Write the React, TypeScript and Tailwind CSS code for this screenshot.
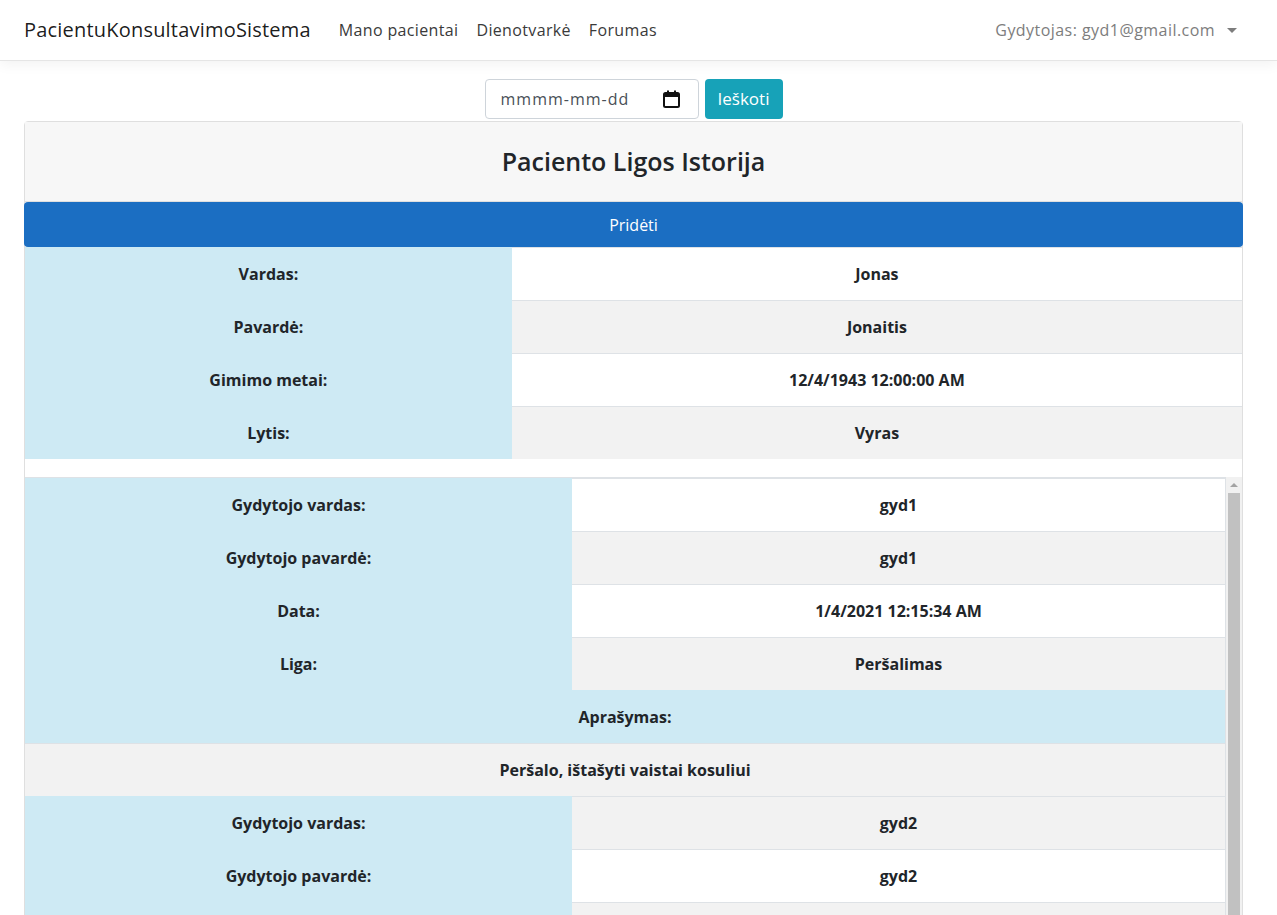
import React from "react";

type Row = { label: string; value: string; striped: boolean };

const patient: Row[] = [
  { label: "Vardas:", value: "Jonas", striped: false },
  { label: "Pavardė:", value: "Jonaitis", striped: true },
  { label: "Gimimo metai:", value: "12/4/1943 12:00:00 AM", striped: false },
  { label: "Lytis:", value: "Vyras", striped: true },
];

type Visit = { vardas: string; pavarde: string; data: string; liga: string; aprasymas: string };

const visits: Visit[] = [
  { vardas: "gyd1", pavarde: "gyd1", data: "1/4/2021 12:15:34 AM", liga: "Peršalimas", aprasymas: "Peršalo, ištašyti vaistai kosuliui" },
  { vardas: "gyd2", pavarde: "gyd2", data: "1/5/2021 10:42:11 AM", liga: "Gripas", aprasymas: "Karščiuoja, paskirtas lovos režimas" },
];

function InfoRow({ label, value, striped, left }: Row & { left: string }) {
  return (
    <div className="flex h-[53px]">
      <div className={`${left} flex shrink-0 items-center justify-center bg-[#ceeaf4] font-bold`}>{label}</div>
      <div
        className={`flex flex-1 items-center justify-center border-t border-[#dee2e6] font-bold ${
          striped ? "bg-[#f2f2f2]" : "bg-white"
        }`}
      >
        {value}
      </div>
    </div>
  );
}

function CalendarIcon() {
  return (
    <svg width="17" height="18" viewBox="0 0 17 18" fill="none">
      <rect x="1" y="3" width="15" height="14" rx="1.5" stroke="#111" strokeWidth="2" />
      <rect x="1" y="3" width="15" height="4" fill="#111" />
      <rect x="4" y="0.5" width="2" height="4" fill="#111" />
      <rect x="11" y="0.5" width="2" height="4" fill="#111" />
    </svg>
  );
}

export default function App() {
  return (
    <div className="h-[915px] overflow-hidden bg-white font-['Open_Sans',sans-serif] text-[16px] text-[#212529]">
      {/* Navbar */}
      <nav className="flex h-[61px] items-center border-b border-[#e5e5e5] pl-6 pr-[40px] shadow-[0_4px_12px_rgba(0,0,0,0.05)]">
        <span className="mr-[28px] text-[20px] tracking-[0.2px] text-black/90">PacientuKonsultavimoSistema</span>
        <div className="flex gap-[18px] tracking-[0.35px] text-[#3a3a3a]">
          <span>Mano pacientai</span>
          <span>Dienotvarkė</span>
          <span>Forumas</span>
        </div>
        <div className="ml-auto flex items-center text-[#7d7d7d]">
          <span className="tracking-[0.45px]">Gydytojas: gyd1@gmail.com</span>
          <span className="ml-[12px] h-0 w-0 border-x-[5px] border-t-[5px] border-x-transparent border-t-[#7d7d7d]" />
        </div>
      </nav>

      <main className="pl-6 pr-[34px]">
        {/* Search */}
        <div className="mt-[18px] flex justify-center gap-[6px]">
          <div className="flex h-[40px] w-[214px] items-center justify-between rounded-[4px] border border-[#ced4da] bg-white pl-[15px] pr-[18px] text-[#495057]">
            <span className="tracking-[1px]">mmmm-mm-dd</span>
            <CalendarIcon />
          </div>
          <button className="h-[40px] w-[78px] rounded-[4px] bg-[#17a2b8] text-[17px] text-white">Ieškoti</button>
        </div>

        {/* Card */}
        <div className="mt-[2px] rounded-[4px] border border-[#dfdfdf]">
          <div className="flex h-[80px] items-center justify-center border-b border-[#dfdfdf] bg-[#f7f7f7]">
            <h3 className="text-[25px] font-semibold">Paciento Ligos Istorija</h3>
          </div>
          <button className="-mx-px flex h-[45px] w-[calc(100%+2px)] items-center justify-center rounded-[4px] bg-[#1b6ec2] text-white">
            Pridėti
          </button>

          {patient.map((r) => (
            <InfoRow key={r.label} {...r} left="w-[40%]" />
          ))}

          <div className="h-[18px]" />

          <div className="flex">
            <div className="flex-1 border-t border-r border-[#dee2e6]">
              {visits.map((v, i) => (
                <div key={i}>
                  <InfoRow label="Gydytojo vardas:" value={v.vardas} striped={i % 2 === 1} left="w-[547px]" />
                  <InfoRow label="Gydytojo pavardė:" value={v.pavarde} striped={i % 2 === 0} left="w-[547px]" />
                  <InfoRow label="Data:" value={v.data} striped={i % 2 === 1} left="w-[547px]" />
                  <InfoRow label="Liga:" value={v.liga} striped={i % 2 === 0} left="w-[547px]" />
                  <div className="flex h-[53px] items-center justify-center bg-[#ceeaf4] font-bold">Aprašymas:</div>
                  <div className="flex h-[53px] items-center justify-center border-t border-[#dee2e6] bg-[#f2f2f2] font-bold">
                    {v.aprasymas}
                  </div>
                </div>
              ))}
            </div>
            {/* scrollbar */}
            <div className="flex w-[16px] flex-col bg-[#f1f1f1]">
              <div className="flex h-[16px] items-center justify-center">
                <span className="h-0 w-0 border-x-[4px] border-b-[4px] border-x-transparent border-b-[#a3a3a3]" />
              </div>
              <div className="mx-[2px] h-[600px] bg-[#c1c1c1]" />
            </div>
          </div>
        </div>
      </main>
    </div>
  );
}
